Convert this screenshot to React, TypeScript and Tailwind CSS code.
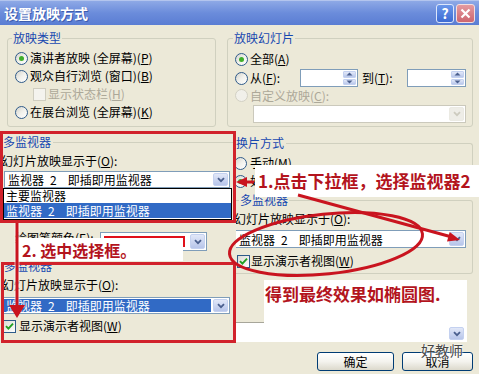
import React from "react";

type P = { className?: string; children?: React.ReactNode };

const Radio = ({ checked = false, disabled = false, className = "" }: { checked?: boolean; disabled?: boolean; className?: string }) => (
  <span
    className={`inline-flex h-[13px] w-[13px] shrink-0 items-center justify-center rounded-full border ${
      disabled ? "border-[#d2d0c4] bg-[#f1f0ea]" : "border-[#2f5b8a] bg-linear-to-br from-[#d4d3cb] via-[#f1f1ec] to-white"
    } ${className}`}
  >
    {checked && <span className="h-[5px] w-[5px] rounded-full bg-[#3fae2a]" />}
  </span>
);

const Check = ({ checked = false, disabled = false, className = "" }: { checked?: boolean; disabled?: boolean; className?: string }) => (
  <span
    className={`inline-flex h-[13px] w-[13px] shrink-0 items-center justify-center border ${
      disabled ? "border-[#cfcdc0] bg-[#f4f3ee]" : "border-[#2f5b8a] bg-linear-to-br from-[#dcdbd4] to-white"
    } ${className}`}
  >
    {checked && (
      <svg width="9" height="9" viewBox="0 0 9 9">
        <path d="M1 4.2 L3.4 6.6 L8 1.6" stroke="#22a022" strokeWidth="1.9" fill="none" />
      </svg>
    )}
  </span>
);

const Chevron = ({ color = "#4a5f8e" }: { color?: string }) => (
  <svg width="8" height="6" viewBox="0 0 8 6">
    <path d="M1 1.2 L4 4.2 L7 1.2" stroke={color} strokeWidth="1.8" fill="none" />
  </svg>
);

const DropBtn = ({ disabled = false, className = "" }: { disabled?: boolean; className?: string }) => (
  <span
    className={`flex w-[15px] shrink-0 items-center justify-center rounded-[2px] border ${
      disabled ? "border-[#ebeae3] bg-[#eeede7]" : "border-[#c4d1f0] bg-linear-to-b from-[#e2e8f8] to-[#b7c5ea]"
    } ${className}`}
  >
    <Chevron color={disabled ? "#cdcbbf" : "#4a5f8e"} />
  </span>
);

const Combo = ({
  children,
  className = "",
  highlight = false,
  disabled = false,
}: P & { highlight?: boolean; disabled?: boolean }) => (
  <div className={`flex border bg-white p-[1px] ${disabled ? "border-[#cbc9bc]" : "border-[#7f9db9]"} ${className}`}>
    <span
      className={`flex flex-1 items-center whitespace-nowrap pl-[2px] leading-[13px] ${
        highlight ? "mr-[2px] bg-[#316ac5] text-white" : ""
      }`}
    >
      {children}
    </span>
    <DropBtn disabled={disabled} />
  </div>
);

const SpinArrow = ({ up }: { up?: boolean }) => (
  <span className="flex flex-1 items-center justify-center rounded-[1px] border border-[#c4d1f0] bg-linear-to-b from-[#e2e8f8] to-[#b9c7ea]">
    <svg width="7" height="4" viewBox="0 0 7 4">
      <path d={up ? "M0.5 3.5 L3.5 0.5 L6.5 3.5 Z" : "M0.5 0.5 L3.5 3.5 L6.5 0.5 Z"} fill="#4a5f8e" />
    </svg>
  </span>
);

const Spin = ({ className = "" }: P) => (
  <div className={`flex h-[18px] border border-[#7f9db9] bg-white p-[1px] ${className}`}>
    <span className="flex-1" />
    <span className="flex w-[13px] flex-col gap-px">
      <SpinArrow up />
      <SpinArrow />
    </span>
  </div>
);

const K = ({ c }: { c: string }) => (
  <>
    (<span className="underline">{c}</span>)
  </>
);

const MonitorText = () => (
  <>
    监视器<span className="ml-[6px]">2</span>
    <span className="ml-[11px]">即插即用监视器</span>
  </>
);

const Btn = ({ children, className = "" }: P) => (
  <div
    className={`flex h-[19px] items-center justify-center rounded-[3px] border border-[#003c74] bg-linear-to-b from-white via-[#f4f3ee] to-[#dcd9cc] ${className}`}
  >
    {children}
  </div>
);

export default function App() {
  const RED_BOX = "border-[#d1222b]";
  return (
    <div className="relative h-[374px] w-[479px] overflow-hidden bg-[#ece9d8] font-['Noto_Sans_CJK_SC','Noto_Sans',sans-serif] text-[12px] leading-[14px] text-black">
      {/* Title bar */}
      <div className="flex h-[25px] items-center border-t border-[#b3c5ee] bg-linear-to-b from-[#8ea9e6] via-[#6b8cdb] to-[#5a7dd3] pl-[4px] pr-[4px]">
        <span className="text-[14px] font-bold leading-[16px] text-white [text-shadow:1px_1px_0_#3c5cae]">设置放映方式</span>
        <div className="ml-auto flex gap-[2px]">
          <div className="flex h-[19px] w-[18px] items-center justify-center rounded-[3px] border border-[#dce6fb] bg-linear-to-b from-[#6a96ea] to-[#3d6bd3] text-[14px] font-bold leading-none text-white">
            ?
          </div>
          <div className="flex h-[19px] w-[19px] items-center justify-center rounded-[3px] border border-[#f4dede] bg-linear-to-b from-[#e49aa0] to-[#cd6670]">
            <svg width="11" height="11" viewBox="0 0 11 11">
              <path d="M1.5 1.5 L9.5 9.5 M9.5 1.5 L1.5 9.5" stroke="white" strokeWidth="2.2" />
            </svg>
          </div>
        </div>
      </div>

      {/* Top row */}
      <div className="flex gap-[11px] pl-[7px] pt-[6px]">
        <fieldset className="h-[96px] w-[209px] rounded-[3px] border border-[#d0d0bf]">
          <legend className="ml-[4px] px-[1px] text-[#1848b0]">放映类型</legend>
          <div className="flex flex-col pl-[7px] pt-[4px]">
            <div className="flex h-[18px] items-center">
              <Radio checked />
              <span className="ml-[2px] whitespace-nowrap">
                演讲者放映 (全屏幕)<K c="P" />
              </span>
            </div>
            <div className="flex h-[18px] items-center">
              <Radio />
              <span className="ml-[2px] whitespace-nowrap">
                观众自行浏览 (窗口)<K c="B" />
              </span>
            </div>
            <div className="flex h-[18px] items-center pl-[18px]">
              <Check disabled />
              <span className="ml-[2px] whitespace-nowrap text-[#aca899]">
                显示状态栏<K c="H" />
              </span>
            </div>
            <div className="flex h-[18px] items-center">
              <Radio />
              <span className="ml-[2px] whitespace-nowrap">
                在展台浏览 (全屏幕)<K c="K" />
              </span>
            </div>
          </div>
        </fieldset>

        <fieldset className="h-[96px] w-[246px] rounded-[3px] border border-[#d0d0bf]">
          <legend className="ml-[5px] px-[1px] text-[#1848b0]">放映幻灯片</legend>
          <div className="flex flex-col pl-[7px] pt-[5px]">
            <div className="flex h-[18px] items-center">
              <Radio checked />
              <span className="ml-[2px]">
                全部<K c="A" />
              </span>
            </div>
            <div className="mt-[1px] flex h-[18px] items-center">
              <Radio />
              <span className="ml-[2px] w-[50px]">
                从<K c="F" />:
              </span>
              <Spin className="w-[58px]" />
              <span className="w-[49px] pl-[4px]">
                到<K c="T" />:
              </span>
              <Spin className="w-[59px]" />
            </div>
            <div className="flex h-[17px] items-center">
              <Radio disabled />
              <span className="ml-[2px] text-[#aca899]">
                自定义放映<K c="C" />:
              </span>
            </div>
            <Combo disabled className="ml-[18px] mt-[1px] h-[18px] w-[213px]">
              {""}
            </Combo>
          </div>
        </fieldset>
      </div>

      {/* Lower area */}
      <div className="flex">
        {/* Left column */}
        <div className="w-[236px] shrink-0">
          <div className={`mt-[4px] flex h-[92px] w-[236px] flex-col overflow-hidden border-[3px] ${RED_BOX}`}>
            <div className="mt-[1px] flex h-[14px] items-center">
              <span className="whitespace-nowrap text-[#1848b0]">多监视器</span>
              <span className="ml-[2px] h-px flex-1 bg-[#d0d0bf]" />
            </div>
            <div className="-ml-[2px] mt-[5px] h-[14px] whitespace-nowrap">
              幻灯片放映显示于<K c="O" />:
            </div>
            <Combo className="ml-[1px] mt-[3px] h-[17px] w-[226px] shrink-0">
              <MonitorText />
            </Combo>
            <div className="flex h-[32px] w-[229px] shrink-0 flex-col border border-black bg-white">
              <div className="h-[14px] whitespace-nowrap pl-[2px]">主要监视器</div>
              <div className="flex h-[15px] items-center whitespace-nowrap bg-[#316ac5] pl-[2px] text-white">
                <MonitorText />
              </div>
            </div>
          </div>

          <div className="flex h-[39px] items-start pt-[9px]">
            <span className="w-[100px] whitespace-nowrap pl-[15px] leading-[12px]">
              绘图笔颜色<K c="E" />:
            </span>
            <div className="flex h-[19px] w-[107px] border border-[#7f9db9] bg-white p-[1px]">
              <span className="m-[2px] mr-[5px] flex-1 bg-[#e0101a]" />
              <DropBtn />
            </div>
          </div>

          <div className={`ml-[1px] flex h-[81px] w-[235px] flex-col overflow-hidden border-[3px] ${RED_BOX}`}>
            <div className="-mt-[6px] flex h-[14px] shrink-0 items-center">
              <span className="whitespace-nowrap text-[#1848b0]">多监视器</span>
            </div>
            <div className="-ml-[2px] mt-[5px] h-[14px] whitespace-nowrap">
              幻灯片放映显示于<K c="O" />:
            </div>
            <Combo highlight className="-ml-[2px] mt-[5px] h-[17px] w-[228px] shrink-0">
              <MonitorText />
            </Combo>
            <div className="mt-[5px] flex h-[14px] shrink-0 items-center">
              <Check checked className="-ml-[1px]" />
              <span className="ml-[3px] whitespace-nowrap">
                显示演示者视图<K c="W" />
              </span>
            </div>
          </div>
        </div>

        {/* Right column */}
        <div className="min-w-0 flex-1 overflow-hidden">
          <fieldset className="mt-[9px] h-[57px] w-[237px] rounded-tr-[3px] border-r border-t border-[#d0d0bf]">
            <legend className="pr-[2px] text-[#1848b0]">换片方式</legend>
            <div className="flex flex-col pt-[4px]">
              <div className="flex h-[18px] items-center">
                <Radio className="-ml-[2px]" />
                <span className="ml-[3px]">
                  手动<K c="M" />
                </span>
              </div>
              <div className="flex h-[18px] items-center">
                <Radio checked className="-ml-[2px]" />
                <span className="ml-[3px] whitespace-nowrap">
                  如果存在排练时间，则使用它<K c="U" />
                </span>
              </div>
            </div>
          </fieldset>

          <fieldset className="h-[81px] w-[237px] rounded-r-[3px] border-b border-r border-t border-[#d0d0bf]">
            <legend className="ml-[3px] px-[1px] text-[#1848b0]">多监视器</legend>
            <div className="flex flex-col">
              <div className="-ml-[2px] mt-[5px] h-[14px] whitespace-nowrap">
                幻灯片放映显示于<K c="O" />:
              </div>
              <Combo className="-ml-[1px] mt-[4px] h-[18px] w-[231px]">
                <MonitorText />
              </Combo>
              <div className="mt-[6px] flex h-[14px] items-center">
                <Check checked className="ml-[1px]" />
                <span className="ml-[1px] whitespace-nowrap">
                  显示演示者视图<K c="W" />
                </span>
              </div>
            </div>
          </fieldset>

          <div className="mt-[48px] flex h-[20px] w-[231px] items-end justify-end border-t border-[#a7a69a] bg-white pb-[2px] pr-[3px]">
            <DropBtn className="h-[13px]" />
          </div>

          <div className="mt-[10px] flex justify-end gap-[8px] pr-[6px]">
            <Btn className="w-[77px]">确定</Btn>
            <Btn className="w-[71px]">取消</Btn>
          </div>
        </div>
      </div>

      {/* Annotation overlays */}
      <div className="absolute left-[255px] top-[165px] flex h-[32px] w-[224px] items-center bg-white pl-[3px] text-[17px] font-bold leading-[20px] whitespace-nowrap text-[#b3141d]">
        1.点击下拉框，选择监视器2
      </div>
      <div className="absolute left-[18px] top-[238px] flex h-[23px] w-[165px] items-center bg-white pl-[4px] text-[16px] font-bold leading-[20px] whitespace-nowrap text-[#b3141d]">
        2. 选中选择框。
      </div>
      <div className="absolute left-[264px] top-[280px] h-[43px] w-[203px] bg-white pl-[1px] pt-[3px] text-[17px] font-bold leading-[22px] whitespace-nowrap text-[#b3141d]">
        得到最终效果如椭圆图.
      </div>

      <svg className="pointer-events-none absolute left-0 top-0" width="479" height="374" viewBox="0 0 479 374">
        <ellipse cx="326" cy="244" rx="97" ry="30" transform="rotate(-6 326 244)" fill="none" stroke="#c9141f" strokeWidth="3" />
        <line x1="298" y1="195" x2="450" y2="236.5" stroke="#c9141f" strokeWidth="3" />
        <polygon points="460,240 447,241.6 449.7,232" fill="#c9141f" />
        <line x1="254" y1="182" x2="244" y2="182" stroke="#c9141f" strokeWidth="3" />
        <polygon points="236,182 247,177 247,187" fill="#c9141f" />
        <line x1="17" y1="223" x2="17" y2="307" stroke="#ffffff" strokeWidth="5" strokeOpacity="0.6" />
        <line x1="17" y1="223" x2="17" y2="307" stroke="#c9141f" strokeWidth="3" />
        <polygon points="9,305 25,305 17,318" fill="#c9141f" />
      </svg>

      <div className="absolute left-[421px] top-[342px] text-[14px] leading-[16px] whitespace-nowrap text-[#454545] [text-shadow:0_0_2px_#ffffff,0_0_2px_#ffffff]">
        好教师
      </div>
    </div>
  );
}
